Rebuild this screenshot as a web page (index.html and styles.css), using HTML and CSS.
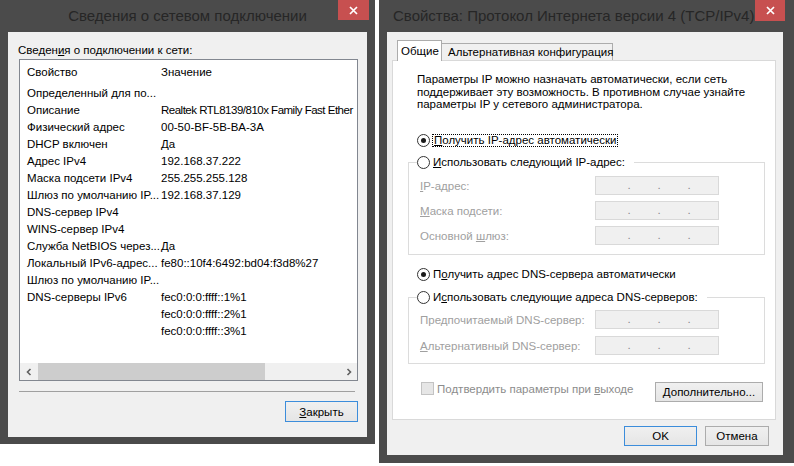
FILE: index.html
```html
<!DOCTYPE html>
<html lang="ru">
<head>
    <meta charset="UTF-8">
    <title>Сведения о сетевом подключении</title>
    <link rel="stylesheet" href="styles.css">
</head>
<body>
<div class="desk">

    <!-- Network connection details -->
    <section class="window win-info">
        <header class="titlebar">
            <h1 class="title">Сведения о сетевом подключении</h1>
            <span class="close-btn">
                <svg width="9" height="9" viewBox="0 0 9 9"><path d="M1 1L8 8M8 1L1 8" stroke="#fff" stroke-width="1.7"/></svg>
            </span>
        </header>
        <div class="client">
            <div class="caption">Сведен<u>и</u>я о подключении к сети:</div>
            <div class="listview">
                <div class="lv-head"><span>Свойство</span><span>Значение</span></div>
                <div class="lv-rows">
                    <div class="lv-row"><span>Определенный для по...</span><span></span></div>
                    <div class="lv-row"><span>Описание</span><span class="tight">Realtek RTL8139/810x Family Fast Ether</span></div>
                    <div class="lv-row"><span>Физический адрес</span><span>00-50-BF-5B-BA-3A</span></div>
                    <div class="lv-row"><span>DHCP включен</span><span>Да</span></div>
                    <div class="lv-row"><span>Адрес IPv4</span><span>192.168.37.222</span></div>
                    <div class="lv-row"><span>Маска подсети IPv4</span><span>255.255.255.128</span></div>
                    <div class="lv-row"><span>Шлюз по умолчанию IP...</span><span>192.168.37.129</span></div>
                    <div class="lv-row"><span>DNS-сервер IPv4</span><span></span></div>
                    <div class="lv-row"><span>WINS-сервер IPv4</span><span></span></div>
                    <div class="lv-row"><span>Служба NetBIOS через...</span><span>Да</span></div>
                    <div class="lv-row"><span>Локальный IPv6-адрес...</span><span>fe80::10f4:6492:bd04:f3d8%27</span></div>
                    <div class="lv-row"><span>Шлюз по умолчанию IP...</span><span></span></div>
                    <div class="lv-row"><span>DNS-серверы IPv6</span><span>fec0:0:0:ffff::1%1</span></div>
                    <div class="lv-row"><span></span><span>fec0:0:0:ffff::2%1</span></div>
                    <div class="lv-row"><span></span><span>fec0:0:0:ffff::3%1</span></div>
                </div>
                <div class="hscroll">
                    <span class="sb-arrow">
                        <svg width="6" height="8" viewBox="0 0 6 8"><path d="M4.5 1L1.5 4L4.5 7" fill="none" stroke="#606060" stroke-width="1.6"/></svg>
                    </span>
                    <span class="sb-track"><span class="sb-thumb"></span></span>
                    <span class="sb-arrow">
                        <svg width="6" height="8" viewBox="0 0 6 8"><path d="M1.5 1L4.5 4L1.5 7" fill="none" stroke="#606060" stroke-width="1.6"/></svg>
                    </span>
                </div>
            </div>
            <div class="divider"></div>
            <div class="btn-row">
                <button class="btn btn-default btn-close"><u>З</u>акрыть</button>
            </div>
        </div>
    </section>

    <!-- TCP/IPv4 properties -->
    <section class="window win-tcp">
        <header class="titlebar">
            <h1 class="title">Свойства: Протокол Интернета версии 4 (TCP/IPv4)</h1>
            <span class="close-btn">
                <svg width="9" height="9" viewBox="0 0 9 9"><path d="M1 1L8 8M8 1L1 8" stroke="#fff" stroke-width="1.7"/></svg>
            </span>
        </header>
        <div class="client">
            <div class="tabs">
                <span class="tab tab-active">Общие</span>
                <span class="tab tab-alt">Альтернативная конфигурация</span>
            </div>
            <div class="tab-page">
                <div class="intro">
                    Параметры IP можно назначать автоматически, если сеть<br>
                    поддерживает эту возможность. В противном случае узнайте<br>
                    параметры IP у сетевого администратора.
                </div>

                <div class="radio-line first-radio">
                    <span class="radio checked"></span>
                    <span class="focus-text"><u>П</u>олучить IP-адрес автоматически</span>
                </div>

                <fieldset class="group group-ip">
                    <legend>
                        <span class="radio-line">
                            <span class="radio"></span>
                            <span class="radio-text"><u>И</u>спользовать следующий IP-адрес:</span>
                        </span>
                    </legend>
                    <div class="field">
                        <span><u>I</u>P-адрес:</span>
                        <span class="ipbox"><span>.</span><span>.</span><span>.</span></span>
                    </div>
                    <div class="field">
                        <span><u>М</u>аска подсети:</span>
                        <span class="ipbox"><span>.</span><span>.</span><span>.</span></span>
                    </div>
                    <div class="field">
                        <span>Основной <u>ш</u>люз:</span>
                        <span class="ipbox"><span>.</span><span>.</span><span>.</span></span>
                    </div>
                </fieldset>

                <div class="radio-line dns-auto">
                    <span class="radio checked"></span>
                    <span class="radio-text">П<u>о</u>лучить адрес DNS-сервера автоматически</span>
                </div>

                <fieldset class="group group-dns">
                    <legend>
                        <span class="radio-line">
                            <span class="radio"></span>
                            <span class="radio-text">И<u>с</u>пользовать следующие адреса DNS-серверов:</span>
                        </span>
                    </legend>
                    <div class="field">
                        <span>Пре<u>д</u>почитаемый DNS-сервер:</span>
                        <span class="ipbox"><span>.</span><span>.</span><span>.</span></span>
                    </div>
                    <div class="field">
                        <span><u>А</u>льтернативный DNS-сервер:</span>
                        <span class="ipbox"><span>.</span><span>.</span><span>.</span></span>
                    </div>
                </fieldset>

                <div class="confirm-row">
                    <span class="check">
                        <span class="checkbox"></span>
                        <span>Подтвердить параметры при <u>в</u>ыходе</span>
                    </span>
                    <button class="btn btn-more"><u>Д</u>ополнительно...</button>
                </div>
            </div>
            <div class="dlg-buttons">
                <button class="btn btn-default btn-ok">OK</button>
                <button class="btn btn-cancel">Отмена</button>
            </div>
        </div>
    </section>

</div>
</body>
</html>
```

FILE: styles.css
```css
/* Global */
* {
    box-sizing: border-box;
}

body {
    margin: 0;
    background: #fff;
    font-family: "Liberation Sans", Arial, sans-serif;
    font-size: 11.5px;
    color: #000;
}

u {
    text-decoration: underline;
    text-underline-offset: 1px;
}

.desk {
    display: flex;
    align-items: flex-start;
    gap: 4px;
    width: 794px;
    height: 466px;
    overflow: hidden;
}

/* Window frame */
.window {
    display: flex;
    flex-direction: column;
    background: #4b4b4b;
}

.win-info {
    width: 375px;
    height: 444px;
}

.win-tcp {
    width: 415px;
    height: 463px;
}

.titlebar {
    display: flex;
    height: 32px;
    flex-shrink: 0;
}

.win-info .titlebar {
    padding: 0 6px 0 37px;
}

.win-tcp .titlebar {
    padding: 0 9px 0 14px;
}

.title {
    flex: 1;
    margin: 0;
    font-size: 15px;
    font-weight: normal;
    line-height: 31px;
    color: #262626;
    white-space: nowrap;
    overflow: hidden;
}

.win-info .title {
    text-align: center;
}

.close-btn {
    width: 31px;
    height: 20px;
    background: #c75050;
    display: flex;
    align-items: center;
    justify-content: center;
}

.win-tcp .close-btn {
    width: 30px;
    height: 21px;
}

.client {
    flex: 1;
    display: flex;
    flex-direction: column;
    background: #f0f0f0;
    margin: 0 8px 7px;
}

.win-tcp .client {
    margin: 0 11px 8px 8px;
}

/* Details list */
.caption {
    margin: 11px 0 0 10px;
    line-height: 14px;
}

.listview {
    margin: 2px 9px 0 11px;
    height: 322px;
    border: 1px solid #828790;
    background: #fff;
    display: flex;
    flex-direction: column;
    overflow: hidden;
    white-space: nowrap;
}

.lv-head,
.lv-row {
    display: grid;
    grid-template-columns: 134px 1fr;
    padding-left: 7px;
    align-items: center;
}

.lv-head {
    height: 24px;
    flex-shrink: 0;
}

.lv-row {
    height: 17px;
}

.tight {
    letter-spacing: -0.5px;
}

.lv-rows {
    flex: 1;
}

.hscroll {
    height: 17px;
    flex-shrink: 0;
    display: flex;
    background: #f0f0f0;
}

.sb-arrow {
    width: 17px;
    display: flex;
    align-items: center;
    justify-content: center;
}

.sb-track {
    flex: 1;
    display: flex;
    padding-left: 1px;
}

.sb-thumb {
    width: 227px;
    background: #cdcdcd;
}

.divider {
    margin: 10px 12px 0 11px;
    border-top: 1px solid #a0a0a0;
}

.btn-row {
    display: flex;
    justify-content: flex-end;
    margin: 9px 9px 0 0;
}

/* Buttons */
.btn {
    font: inherit;
    color: #000;
    height: 20px;
    padding: 0;
    border: 1px solid #acacac;
    background: linear-gradient(#f0f0f0, #e5e5e5);
}

.btn-default {
    border-color: #3c8ddb;
}

.btn-close {
    width: 73px;
    height: 21px;
}

/* Tabs */
.tabs {
    display: flex;
    align-items: flex-end;
    height: 20px;
    margin-top: 8px;
    padding-left: 10px;
}

.tab {
    height: 17px;
    border: 1px solid #acacac;
    border-bottom: none;
    background: #f0f0f0;
    line-height: 16px;
    white-space: nowrap;
}

.tab-active {
    width: 45px;
    height: 21px;
    margin-bottom: -1px;
    padding-left: 3px;
    line-height: 20px;
    background: #fff;
    position: relative;
    z-index: 1;
}

.tab-alt {
    width: 171px;
    padding-left: 6px;
    border-left: none;
}

.tab-page {
    height: 360px;
    margin: 0 7px 0 5px;
    padding: 0 10px 0 15px;
    border: 1px solid #d9d9d9;
    background: #fff;
    display: flex;
    flex-direction: column;
}

.intro {
    margin: 12px 0 0 9px;
    line-height: 12.5px;
    white-space: nowrap;
}

/* Radios */
.radio-line {
    display: flex;
    align-items: center;
    height: 16px;
    white-space: nowrap;
}

.first-radio {
    margin: 21.5px 0 0 9px;
}

.dns-auto {
    margin: 11px 0 0 9px;
}

.radio {
    width: 13px;
    height: 13px;
    flex-shrink: 0;
    border: 1px solid #333;
    border-radius: 50%;
    background: #fff;
    display: flex;
    align-items: center;
    justify-content: center;
}

.radio.checked::after {
    content: "";
    width: 5px;
    height: 5px;
    border-radius: 50%;
    background: #1a1a1a;
}

.radio-text {
    margin-left: 3px;
}

.focus-text {
    margin-left: 2px;
    padding: 0 1px;
    border: 1px dotted #000;
    line-height: 11px;
}

/* Group boxes */
.group {
    margin: 0;
    min-width: 0;
    border: 1px solid #dcdcdc;
}

.group-ip {
    margin-top: 6px;
    padding: 6px 0 9px 11px;
}

.group-dns {
    margin-top: 7px;
    padding: 5px 0 8px 11px;
}

.group legend {
    margin-left: -3px;
    padding: 0 9px 0 0;
}

.field {
    display: grid;
    grid-template-columns: 175px 124px;
    height: 19px;
    align-items: center;
    color: #a0a0a0;
    white-space: nowrap;
}

.group-ip .field + .field {
    margin-top: 6px;
}

.group-dns .field + .field {
    margin-top: 7px;
}

.ipbox {
    height: 19px;
    display: flex;
    padding-left: 18px;
    border: 1px solid #d9d9d9;
    background: #f0f0f0;
    color: #8a8a8a;
    line-height: 17px;
}

.ipbox span {
    width: 30px;
    text-align: center;
}

/* Bottom of the tab page */
.confirm-row {
    display: flex;
    align-items: flex-start;
    justify-content: space-between;
    height: 20px;
    margin-top: 18px;
}

.check {
    display: flex;
    align-items: center;
    height: 13px;
    margin-left: 13px;
    color: #8c8c8c;
    white-space: nowrap;
}

.checkbox {
    width: 13px;
    height: 13px;
    margin-right: 3px;
    border: 1px solid #c3c3c3;
    background: #e6e6e6;
}

.btn-more {
    width: 108px;
    margin-right: 2px;
}

.dlg-buttons {
    display: flex;
    justify-content: flex-end;
    gap: 8px;
    margin: 6px 14px 0 0;
}

.btn-ok {
    width: 73px;
}

.btn-cancel {
    width: 64px;
}
```
